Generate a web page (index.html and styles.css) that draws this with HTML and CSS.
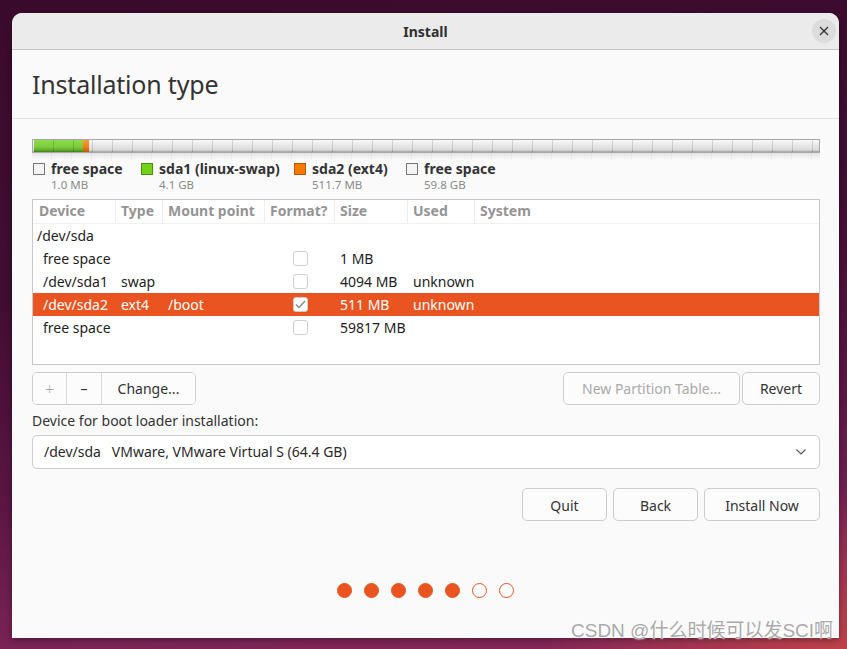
FILE: index.html
```html
<!DOCTYPE html>
<html>
<head>
<meta charset="utf-8">
<link rel="stylesheet" href="styles.css">
</head>
<body>
<div class="window">
  <div class="titlebar">
    <span class="title">Install</span>
    <span class="close"><svg width="10" height="10" viewBox="0 0 10 10"><path d="M1 1L9 9M9 1L1 9" stroke="#333" stroke-width="1.3" fill="none"/></svg></span>
  </div>
  <div class="content">
    <div class="heading"><h1>Installation type</h1></div>
    <div class="body">
      <div class="bar-wrap">
        <div class="bar">
          <div class="seg free1"></div>
          <div class="seg green"></div>
          <div class="seg orange"></div>
          <div class="seg free2"></div>
        </div>
        <div class="reflect"></div>
      </div>
      <div class="legend">
        <div class="lg lg1"><span class="sw sw-free"></span><div><div class="lname">free space</div><div class="lsize">1.0 MB</div></div></div>
        <div class="lg lg2"><span class="sw sw-green"></span><div><div class="lname">sda1 (linux-swap)</div><div class="lsize">4.1 GB</div></div></div>
        <div class="lg lg3"><span class="sw sw-orange"></span><div><div class="lname">sda2 (ext4)</div><div class="lsize">511.7 MB</div></div></div>
        <div class="lg lg4"><span class="sw sw-free"></span><div><div class="lname">free space</div><div class="lsize">59.8 GB</div></div></div>
      </div>
      <div class="table">
        <div class="row head">
          <div class="c first">Device</div><div class="c">Type</div><div class="c">Mount point</div><div class="c">Format?</div><div class="c">Size</div><div class="c">Used</div><div class="c last">System</div>
        </div>
        <div class="row">
          <div class="c dev0">/dev/sda</div><div class="c"></div><div class="c"></div><div class="c"></div><div class="c"></div><div class="c"></div><div class="c"></div>
        </div>
        <div class="row">
          <div class="c dev">free space</div><div class="c"></div><div class="c"></div><div class="c fmt"><span class="cb"></span></div><div class="c">1 MB</div><div class="c"></div><div class="c"></div>
        </div>
        <div class="row">
          <div class="c dev">/dev/sda1</div><div class="c">swap</div><div class="c"></div><div class="c fmt"><span class="cb"></span></div><div class="c">4094 MB</div><div class="c">unknown</div><div class="c"></div>
        </div>
        <div class="row sel">
          <div class="c dev">/dev/sda2</div><div class="c">ext4</div><div class="c">/boot</div><div class="c fmt"><span class="cb"><svg width="11" height="9" viewBox="0 0 11 9"><path d="M1 4.5L4 7.5L10 1" stroke="#8a8a8a" stroke-width="1.4" fill="none"/></svg></span></div><div class="c">511 MB</div><div class="c">unknown</div><div class="c"></div>
        </div>
        <div class="row">
          <div class="c dev">free space</div><div class="c"></div><div class="c"></div><div class="c fmt"><span class="cb"></span></div><div class="c">59817 MB</div><div class="c"></div><div class="c"></div>
        </div>
      </div>
      <div class="toolrow">
        <div class="group">
          <button class="btn gb plus">+</button>
          <button class="btn gb minus">&#8211;</button>
          <button class="btn gb change">Change...</button>
        </div>
        <div class="right">
          <button class="btn disabled npt">New Partition Table...</button>
          <button class="btn revert">Revert</button>
        </div>
      </div>
      <div class="label">Device for boot loader installation:</div>
      <div class="combo">
        <span>/dev/sda&nbsp;&nbsp;&nbsp;VMware, VMware Virtual S (64.4 GB)</span>
        <svg width="12" height="8" viewBox="0 0 12 8"><path d="M1.5 1.5L6 6L10.5 1.5" stroke="#555" stroke-width="1.1" fill="none"/></svg>
      </div>
      <div class="actions">
        <button class="btn act quit">Quit</button>
        <button class="btn act back">Back</button>
        <button class="btn act install">Install Now</button>
      </div>
      <div class="dots">
        <span class="dot on"></span><span class="dot on"></span><span class="dot on"></span><span class="dot on"></span><span class="dot on"></span><span class="dot"></span><span class="dot"></span>
      </div>
    </div>
  </div>
</div>
<div class="watermark">CSDN @什么时候可以发SCI啊</div>
</body>
</html>
```
FILE: styles.css
```css
html, body {
  margin: 0;
  padding: 0;
  width: 847px;
  height: 649px;
  overflow: hidden;
}
body {
  position: relative;
  font-family: "Noto Sans", "Open Sans", sans-serif;
  background:
    radial-gradient(ellipse 300px 160px at 847px 649px, rgba(200,70,70,0.85), rgba(200,70,70,0) 100%),
    linear-gradient(172deg, #3a0a2c 0%, #420d33 40%, #5a1543 65%, #7a2356 85%, #8a2a5a 100%);
}
.window {
  margin: 13px 0 0 12px;
  width: 827px;
  height: 625px;
  background: #fafafa;
  border-radius: 10px 10px 0 0;
  overflow: hidden;
  box-shadow: 0 2px 6px rgba(0,0,0,0.35);
  display: flex;
  flex-direction: column;
}
.titlebar {
  height: 36px;
  background: #ebebeb;
  border-bottom: 1px solid #c4c4c4;
  display: flex;
  align-items: center;
  justify-content: center;
  position: relative;
  flex: none;
}
.title {
  font-size: 14px;
  font-weight: bold;
  color: #303030;
}
.close {
  position: absolute;
  right: 3px;
  top: 6px;
  width: 24px;
  height: 24px;
  border-radius: 50%;
  background: #dcdcdc;
  display: flex;
  align-items: center;
  justify-content: center;
}
.heading {
  height: 68px;
  border-bottom: 1px solid #e3e3e3;
  display: flex;
  align-items: center;
  padding-left: 20px;
}
.heading h1 {
  margin: 0;
  font-size: 25px;
  font-weight: normal;
  color: #333;
  letter-spacing: -0.2px;
}
.body {
  padding: 20px 19px 0 20px;
}
.bar-wrap {
  width: 788px;
}
.bar {
  height: 12px;
  border: 1px solid #a8a8a8;
  display: flex;
  background:
    repeating-linear-gradient(90deg, transparent 0 19px, rgba(0,0,0,0.13) 19px 20px),
    linear-gradient(180deg, #f8f8f8 0%, #e6e6e6 50%, #d8d8d8 85%, #9a9a9a 100%);
}
.seg { height: 100%; }
.free1 { width: 1px; }
.green {
  width: 49px;
  background:
    repeating-linear-gradient(90deg, transparent 0 19px, rgba(0,0,0,0.15) 19px 20px),
    linear-gradient(180deg, #8fdc4e 0%, #7ccc3a 60%, #5a9e27 90%, #3f7a18 100%);
}
.orange {
  width: 6px;
  background: linear-gradient(180deg, #ff9a3c 0%, #f37c16 60%, #b85a0a 100%);
}
.free2 { flex: 1; }
.reflect {
  height: 7px;
  background:
    repeating-linear-gradient(90deg, transparent 0 19px, rgba(0,0,0,0.04) 19px 20px),
    linear-gradient(180deg, rgba(0,0,0,0.09), rgba(0,0,0,0));
}
.legend {
  display: flex;
  margin-top: 0;
  height: 39px;
}
.lg {
  display: flex;
  align-items: flex-start;
}
.sw {
  width: 10px;
  height: 10px;
  border: 1px solid #6a6a6a;
  margin: 3px 6px 0 1px;
  flex: none;
}
.sw-free { background: #f4f4f4; border-color: #777; }
.sw-green { background: #73d216; border-color: #4e8f12; }
.sw-orange { background: #f57900; border-color: #b85800; }
.lname {
  font-size: 14px;
  font-weight: bold;
  color: #333;
  line-height: 17px;
}
.lsize {
  font-size: 11.5px;
  color: #8a8a8a;
  line-height: 14px;
  margin-top: 1px;
}
.lg1 { width: 108px; }
.lg2 { width: 153px; }
.lg3 { width: 112px; }
.table {
  width: 786px;
  height: 164px;
  border: 1px solid #c8c8c8;
  background: #fff;
}
.row {
  display: grid;
  grid-template-columns: 83px 47px 102px 70px 73px 67px 1fr;
  height: 23px;
  line-height: 21px;
  align-items: center;
  font-size: 14px;
  color: #1e1e1e;
}
.row.head {
  height: 23px;
  border-bottom: 1px solid #f0f0f0;
  margin-bottom: 0;
}
.head .c {
  color: #949494;
  font-weight: bold;
  padding-left: 8px;
  height: 23px;
  line-height: 22px;
  border-right: 1px solid #eeeeee;
  box-sizing: border-box;
}
.head .c.first { padding-left: 6px; }
.head .c.last { border-right: none; }
.row .c {
  white-space: nowrap;
  padding-left: 5px;
}
.row .c.dev0 { padding-left: 4px; }
.row .c.dev { padding-left: 10px; }
.row.sel {
  background: #e95420;
  color: #fff;
}
.fmt {
  display: flex;
  align-items: center;
}
.row .c.fmt { padding-left: 28px; }
.cb {
  width: 13px;
  height: 13px;
  border: 1px solid #cfcfcf;
  border-radius: 3px;
  background: #fff;
  display: flex;
  align-items: center;
  justify-content: center;
}
.toolrow {
  display: flex;
  justify-content: space-between;
  margin-top: 7px;
  height: 33px;
}
.group {
  display: flex;
  border: 1px solid #cdcdcd;
  border-radius: 5px;
  overflow: hidden;
  background: #fcfcfc;
}
.btn {
  font-family: "Noto Sans", "Open Sans", sans-serif;
  font-size: 14px;
  color: #333;
  background: #fcfcfc;
  border: 1px solid #cdcdcd;
  border-radius: 5px;
  padding: 0;
  height: 33px;
  cursor: default;
}
.gb {
  border: none;
  border-radius: 0;
  height: 31px;
}
.plus { width: 34px; border-right: 1px solid #dcdcdc; color: #aaa; font-size: 17px; font-weight: 300; }
.minus { width: 35px; border-right: 1px solid #dcdcdc; font-size: 14px; }
.change { width: 93px; }
.right { display: flex; gap: 2px; }
.npt { width: 177px; color: #aaa; }
.revert { width: 78px; }
.label {
  font-size: 14px;
  color: #333;
  margin-top: 7px;
  height: 22px;
  line-height: 18px;
}
.combo {
  height: 32px;
  border: 1px solid #cdcdcd;
  border-radius: 5px;
  background: #fff;
  display: flex;
  align-items: center;
  justify-content: space-between;
  padding: 0 12px 0 11px;
  font-size: 14px;
  color: #2a2a2a;
  margin-top: 1px;
}
.combo span { position: relative; top: -1px; }
.actions {
  display: flex;
  justify-content: flex-end;
  gap: 6px;
  margin-top: 19px;
}
.act { height: 33px; padding-top: 1px; }
.quit { width: 85px; }
.back { width: 85px; }
.install { width: 116px; }
.dots {
  display: flex;
  justify-content: center;
  gap: 12px;
  margin-top: 62px;
  margin-left: -1px;
}
.dot {
  width: 13px;
  height: 13px;
  border-radius: 50%;
  border: 1.5px solid #e95420;
  background: #fff;
}
.dot.on { background: #e95420; }
.watermark {
  position: absolute;
  left: 571px;
  top: 615px;
  font-size: 19px;
  font-family: "Liberation Sans", "Noto Sans CJK SC", sans-serif;
  color: #a9a9a9;
  text-shadow: 0 0 2px #fff, 0 0 1px #fff;
  white-space: nowrap;
}
```
